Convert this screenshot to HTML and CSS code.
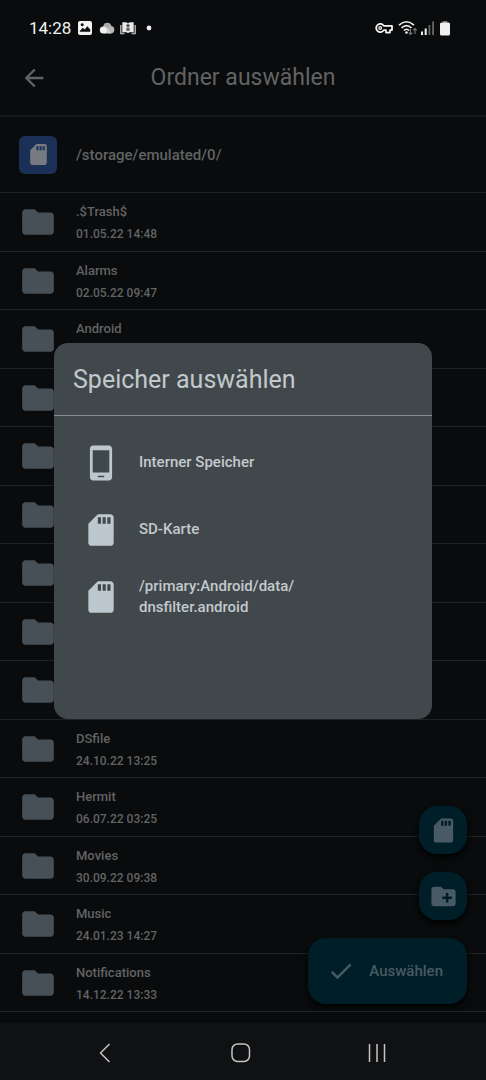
FILE: index.html
```html
<!DOCTYPE html>
<html lang="de">
<head>
<meta charset="utf-8">
<meta name="viewport" content="width=device-width, initial-scale=1">
<title>Ordner auswählen</title>
<link rel="stylesheet" href="styles.css">
</head>
<body>
<svg class="symbols" aria-hidden="true">
  <symbol id="folder" viewBox="0 0 24 24"><path d="M10 4H4c-1.100 0-2 .9-2 2v12c0 1.100.9 2 2 2h16c1.100 0 2-.9 2-2V8c0-1.100-.9-2-2-2h-8z"/></symbol>
  <symbol id="sd" viewBox="0 0 24 24"><path d="M18 2h-8L4 8v12c0 1.100.9 2 2 2h12c1.100 0 2-.9 2-2V4c0-1.100-.9-2-2-2zm-6 6h-2V4h2v4zm3 0h-2V4h2v4zm3 0h-2V4h2v4z"/></symbol>
</svg>
<div class="screen">
  <div class="status">
    <span class="clock">14:28</span>
    <svg class="st-image" width="16" height="16" viewBox="0 0 16 16"><path fill="#f2f2f2" fill-rule="evenodd" d="M3 1h10q2 0 2 2v10q0 2-2 2H3q-2 0-2-2V3q0-2 2-2zM2.800 11.800h10.400V9.500L10.300 6.300 7.700 9.500 5.800 7.800 2.800 11zM5.200 3.300a1.500 1.500 0 1 0 .01 0z"/></svg>
    <svg class="st-cloud" width="16" height="16" viewBox="0 0 16 16"><circle cx="8.300" cy="6.800" r="4" fill="#aaa"/><circle cx="11.600" cy="9.800" r="3.700" fill="#b8b8b8"/><path d="M4.500 13.600 9 8l3 5.500z" fill="#d2d2d2"/><circle cx="4.400" cy="10" r="3.600" fill="#efefef"/></svg>
    <svg class="st-book" width="16" height="16" viewBox="0 0 16 16"><path d="M.8 5v8.500h3.500M15.200 5v8.500h-3.500" fill="none" stroke="#b5b5b5" stroke-width="1.400"/><path d="M2.300 2.300h4L8 3.500l1.700-1.200h4v9.900H9.700L8 13l-1.700-.8h-4z" fill="#e8e8e8"/><circle cx="8" cy="5.500" r="1.600" fill="#4a4a4a"/><circle cx="8" cy="9.200" r="1.900" fill="#6a6a6a"/></svg>
    <svg class="st-dot" width="6" height="6" viewBox="0 0 6 6"><circle cx="3" cy="3" r="2.400" fill="#eee"/></svg>
    <span class="spacer"></span>
    <svg class="st-key" width="18" height="14" viewBox="0 0 18 14"><path d="M8.800 4.900A4.100 4.100 0 1 0 8.800 9.100H11v2.500h4V9.100h2V4.900z" fill="none" stroke="#f2f2f2" stroke-width="1.800" stroke-linejoin="round"/><circle cx="5.200" cy="7" r="1.300" fill="none" stroke="#f2f2f2" stroke-width="1.300"/></svg>
    <svg class="st-wifi" width="20" height="16" viewBox="0 0 20 16"><g fill="none" stroke="#f2f2f2" stroke-width="1.600"><path d="M1 5.200Q8.500-1.700 16 5.200"/><path d="M3.500 8Q8.500 3.300 13.500 8"/><path d="M5.800 10.500Q8.500 8 11.200 10.500"/></g><circle cx="8.500" cy="12.500" r="1.300" fill="#f2f2f2"/><path d="M12.500 9v5.500m-1.800-1.800 1.800 1.800 1.800-1.800M17 14V8.500m-1.800 1.800L17 8.500l1.800 1.800" fill="none" stroke="#777" stroke-width="1.100"/></svg>
    <svg class="st-signal" width="14" height="14" viewBox="0 0 14 14"><path fill="#f2f2f2" d="M0 10.500h2V14H0zM3.700 7.500h2V14h-2z"/><path fill="#666" d="M7.500 4h1.800v10H7.500zM11.200.5H13V14h-1.800z"/></svg>
    <svg class="st-battery" width="10" height="15" viewBox="0 0 10 15"><path d="M2.800 0h4.400v2H2.800z" fill="#777"/><rect y="1.500" width="10" height="13" rx="1.500" fill="#f0f0f0"/></svg>
  </div>
  <header class="appbar">
    <button class="back" aria-label="Zurück"><svg width="28" height="28" viewBox="0 0 24 24"><path d="M20 11H7.830l5.590-5.590L12 4l-8 8 8 8 1.410-1.410L7.830 13H20v-2z"/></svg></button>
    <h1>Ordner auswählen</h1>
  </header>
  <div class="path">
    <span class="tile"><svg width="25" height="25"><use href="#sd"/></svg></span>
    <span>/storage/emulated/0/</span>
  </div>
  <ul class="files">
    <li><svg><use href="#folder"/></svg><div><b>.$Trash$</b><time>01.05.22 14:48</time></div></li>
    <li><svg><use href="#folder"/></svg><div><b>Alarms</b><time>02.05.22 09:47</time></div></li>
    <li><svg><use href="#folder"/></svg><div class="single"><b>Android</b></div></li>
    <li><svg><use href="#folder"/></svg></li>
    <li><svg><use href="#folder"/></svg></li>
    <li><svg><use href="#folder"/></svg></li>
    <li><svg><use href="#folder"/></svg></li>
    <li><svg><use href="#folder"/></svg></li>
    <li><svg><use href="#folder"/></svg></li>
    <li><svg><use href="#folder"/></svg><div><b>DSfile</b><time>24.10.22 13:25</time></div></li>
    <li><svg><use href="#folder"/></svg><div><b>Hermit</b><time>06.07.22 03:25</time></div></li>
    <li><svg><use href="#folder"/></svg><div><b>Movies</b><time>30.09.22 09:38</time></div></li>
    <li><svg><use href="#folder"/></svg><div><b>Music</b><time>24.01.23 14:27</time></div></li>
    <li><svg><use href="#folder"/></svg><div><b>Notifications</b><time>14.12.22 13:33</time></div></li>
  </ul>
  <nav class="navbar">
    <button aria-label="Zurück"><svg width="20" height="20" viewBox="0 0 20 20"><path d="M14.500 1 5.500 10l9 9"/></svg></button>
    <button aria-label="Startbildschirm"><svg width="20" height="20" viewBox="0 0 20 20"><rect x="1" y="1" width="17.500" height="17.500" rx="5.500"/></svg></button>
    <button aria-label="Letzte Apps"><svg width="20" height="20" viewBox="0 0 20 20"><path d="M2.500 1v18M10 1v18M17.500 1v18"/></svg></button>
  </nav>
  <div class="fabs">
    <button class="fab" aria-label="Speicher"><svg width="29" height="29"><use href="#sd"/></svg></button>
    <button class="fab" aria-label="Neuer Ordner"><svg width="29" height="29" viewBox="0 0 24 24"><path d="M20 6h-8l-2-2H4c-1.110 0-1.990.89-1.990 2L2 18c0 1.110.89 2 2 2h16c1.110 0 2-.89 2-2V8c0-1.110-.89-2-2-2zm-1 8h-3v3h-2v-3h-3v-2h3V9h2v3h3v2z"/></svg></button>
    <button class="fab wide"><svg width="28" height="28" viewBox="0 0 24 24"><path d="M9 16.170 4.830 12l-1.420 1.410L9 19 21 7l-1.410-1.410z"/></svg>Auswählen</button>
  </div>
  <div class="overlay">
    <section class="dialog" role="dialog" aria-labelledby="dialog-title">
      <h2 id="dialog-title">Speicher auswählen</h2>
      <div class="options">
        <button><svg viewBox="0 0 24 24"><path d="M17 1H7C5.900 1 5 1.900 5 3v18c0 1.100.9 2 2 2h10c1.100 0 2-.9 2-2V3c0-1.100-.9-2-2-2zm-3 20h-4v-1h4v1zm3.250-3H6.750V4h10.500v14z"/></svg><span>Interner Speicher</span></button>
        <button><svg><use href="#sd"/></svg><span>SD-Karte</span></button>
        <button><svg><use href="#sd"/></svg><span>/primary:Android/data/<br>dnsfilter.android</span></button>
      </div>
    </section>
  </div>
</div>
</body>
</html>
```
FILE: styles.css
```css
* { box-sizing: border-box; }
body {
  margin: 0;
  background: #090b0c;
  color: #626364;
  font-family: Roboto, sans-serif;
}
button {
  border: 0;
  padding: 0;
  background: none;
  color: inherit;
  font: inherit;
  text-align: left;
}
svg { display: block; flex: none; fill: currentColor; }
.symbols { position: absolute; width: 0; height: 0; }
.screen {
  position: relative;
  display: flex;
  flex-direction: column;
  min-height: 100vh;
}

.status {
  display: flex;
  align-items: center;
  height: 40px;
  padding: 16px 36px 0 29px;
  color: #f2f2f2;
}
.clock { font-size: 17px; line-height: 24px; margin-right: 6px; }
.st-cloud { margin-left: 6px; }
.st-book { margin-left: 5px; }
.st-dot { margin-left: 10px; }
.spacer { flex: 1; }
.st-wifi { margin-left: 5px; }
.st-signal { margin-left: 3px; }
.st-battery { margin-left: 5px; }

.appbar {
  display: grid;
  grid-template-columns: 28px 1fr 28px;
  align-items: center;
  height: 77px;
  padding: 0 20px;
  border-bottom: 2px solid #17191a;
}
h1, h2 { margin: 0; font-weight: 400; }
.appbar h1 { font-size: 23px; line-height: 32px; text-align: center; }

.path {
  display: flex;
  align-items: center;
  gap: 19px;
  height: 76px;
  padding: 0 19px;
  border-bottom: 1px solid #202223;
  font-size: 15px;
  font-weight: 500;
}
.tile {
  display: grid;
  place-items: center;
  width: 38px;
  height: 38px;
  border-radius: 6px;
  background: #1b3056;
  color: #777a7e;
}

.files {
  flex: 1;
  display: grid;
  grid-auto-rows: 1fr;
  margin: 0;
  padding: 0 0 11px;
  list-style: none;
}
.files li {
  display: flex;
  align-items: center;
  gap: 19px;
  padding: 1px 19px 0;
  border-bottom: 1px solid #202223;
}
.files svg { width: 38px; height: 38px; color: #465056; }
.files div { padding-top: 2px; }
.files b, .files time {
  display: block;
  font-size: 13px;
  font-weight: 500;
  line-height: 22px;
}
.files time { font-size: 12px; }
.files .single { padding-bottom: 22px; }

.navbar {
  display: grid;
  grid-template-columns: repeat(3, 1fr);
  height: 57px;
  padding: 3px 41px 0 37px;
  background: #101112;
  color: #c4c4c4;
}
.navbar button { display: grid; place-items: center; }
.navbar svg { fill: none; stroke: currentColor; stroke-width: 1.500; }

.fabs {
  position: absolute;
  right: 19px;
  bottom: 76px;
  display: flex;
  flex-direction: column;
  align-items: flex-end;
  gap: 18px;
}
.fab {
  display: grid;
  place-items: center;
  width: 48px;
  height: 48px;
  border-radius: 18px;
  background: #001e28;
  box-shadow: 0 3px 6px #000;
  color: #495a64;
}
.wide {
  display: flex;
  align-items: center;
  gap: 14px;
  width: auto;
  height: 66px;
  padding: 0 24px 0 19px;
  font-size: 15px;
  font-weight: 500;
}

.overlay {
  position: absolute;
  inset: 0;
  display: flex;
  align-items: center;
  padding: 0 54px 18px;
}
.dialog {
  flex: 1;
  border-radius: 14px;
  background: #41484b;
  color: #c2c9cd;
}
.dialog h2 {
  padding: 19px 19px 17px;
  border-bottom: 1px solid #858d90;
  font-size: 25px;
  line-height: 36px;
}
.options { padding: 13px 28px 89px; }
.options button {
  display: flex;
  align-items: center;
  gap: 19px;
  width: 100%;
  min-height: 67px;
  font-size: 15px;
  font-weight: 500;
  line-height: 21px;
}
.options svg { width: 38px; height: 38px; color: #bdc7ce; }
```
